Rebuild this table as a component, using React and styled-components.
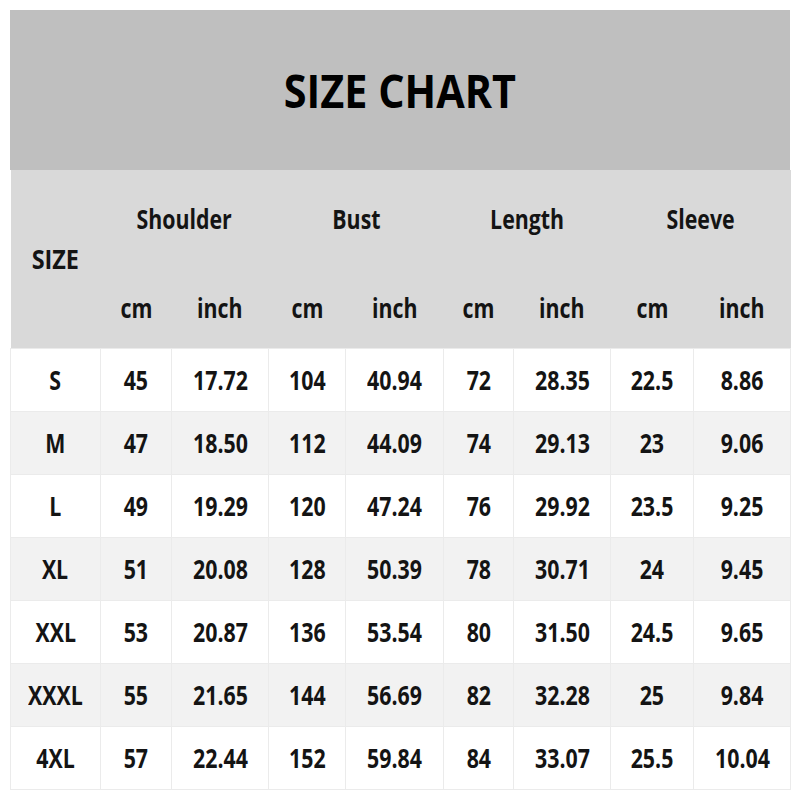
import React from 'react'
import styled, { createGlobalStyle } from 'styled-components'

const GlobalStyle = createGlobalStyle`
    body {
        margin: 0;
        padding: 10px;
        background: #ffffff;
        font-family: "Open Sans", "Liberation Sans", sans-serif;
    }
`

const widths = [90, 71, 97, 77, 98, 70, 97, 83, 97]

const groups = ['Shoulder', 'Bust', 'Length', 'Sleeve']

const rows = [
    ['S', '45', '17.72', '104', '40.94', '72', '28.35', '22.5', '8.86'],
    ['M', '47', '18.50', '112', '44.09', '74', '29.13', '23', '9.06'],
    ['L', '49', '19.29', '120', '47.24', '76', '29.92', '23.5', '9.25'],
    ['XL', '51', '20.08', '128', '50.39', '78', '30.71', '24', '9.45'],
    ['XXL', '53', '20.87', '136', '53.54', '80', '31.50', '24.5', '9.65'],
    ['XXXL', '55', '21.65', '144', '56.69', '82', '32.28', '25', '9.84'],
    ['4XL', '57', '22.44', '152', '59.84', '84', '33.07', '25.5', '10.04'],
]

function App() {
    return (
        <>
            <GlobalStyle />
            <Chart>
                <Title>
                    <Squeeze $sx={0.88}>SIZE CHART</Squeeze>
                </Title>
                <Table>
                    <colgroup>
                        {widths.map((w, i) => (
                            <col key={i} style={{ width: w }} />
                        ))}
                    </colgroup>
                    <thead>
                        <tr>
                            <HeadCell rowSpan={2} $h={98}>
                                <Squeeze $sx={0.9}>SIZE</Squeeze>
                            </HeadCell>
                            {groups.map((g) => (
                                <HeadCell key={g} colSpan={2} $h={98}>
                                    <Squeeze>{g}</Squeeze>
                                </HeadCell>
                            ))}
                        </tr>
                        <tr>
                            {groups.map((g) => (
                                <React.Fragment key={g}>
                                    <HeadCell $h={80}>
                                        <Squeeze>cm</Squeeze>
                                    </HeadCell>
                                    <HeadCell $h={80}>
                                        <Squeeze>inch</Squeeze>
                                    </HeadCell>
                                </React.Fragment>
                            ))}
                        </tr>
                    </thead>
                    <tbody>
                        {rows.map((r, i) => (
                            <Row key={r[0]} $alt={i % 2 === 1}>
                                {r.map((v, j) => (
                                    <Cell key={j}>
                                        <Squeeze>{v}</Squeeze>
                                    </Cell>
                                ))}
                            </Row>
                        ))}
                    </tbody>
                </Table>
            </Chart>
        </>
    )
}

export default App

const Chart = styled.div`
    width: 780px;
    display: flex;
    flex-direction: column;
`

const Title = styled.div`
    height: 160px;
    background: #bfbfbf;
    display: flex;
    align-items: center;
    justify-content: center;
    font-size: 47px;
    font-weight: 700;
    color: #000;
`

const Squeeze = styled.span`
    display: inline-block;
    transform: scaleX(${(p) => p.$sx || 0.82});
    white-space: nowrap;
`

const Table = styled.table`
    width: 780px;
    border-collapse: collapse;
    table-layout: fixed;
    color: #141414;
    font-size: 26px;
    font-weight: 700;
`

const HeadCell = styled.th`
    height: ${(p) => p.$h}px;
    padding: 0;
    background: #d9d9d9;
    font-weight: 700;
    text-align: center;
    vertical-align: middle;
`

const Row = styled.tr`
    height: 63px;
    background: ${(p) => (p.$alt ? '#f2f2f2' : '#ffffff')};
`

const Cell = styled.td`
    padding: 0;
    text-align: center;
    vertical-align: middle;
    border: 1px solid #ebebeb;
`
